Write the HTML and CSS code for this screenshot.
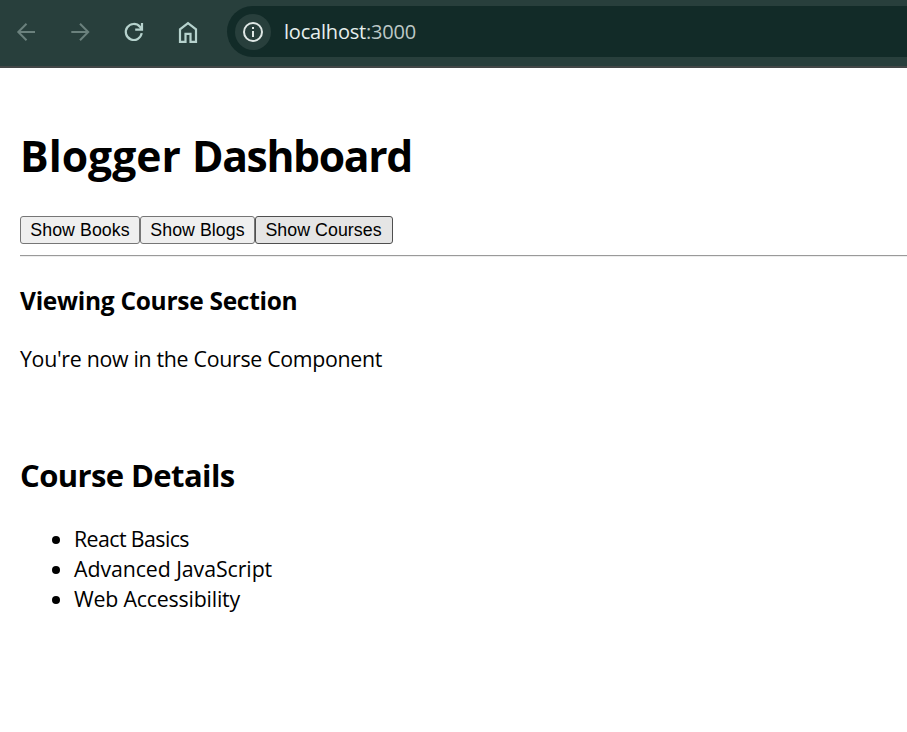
FILE: index.html
```html
<!DOCTYPE html>
<html lang="en">
<head>
<meta charset="utf-8">
<title>Blogger Dashboard</title>
<link rel="stylesheet" href="styles.css">
</head>
<body>
<header class="toolbar">
  <svg class="icon dim" viewBox="0 0 24 24"><path d="M21 12H4.300M12.500 3.800L4.300 12l8.200 8.200"/></svg>
  <svg class="icon dim" viewBox="0 0 24 24"><path d="M3.300 12h16.900M12 3.800l8.200 8.200-8.200 8.200"/></svg>
  <svg class="icon" viewBox="0 0 24 24"><path d="M19.700 13.200A8 8 0 1 1 17.900 6.800L19.900 9.200M20 3v6.700h-6.800"/></svg>
  <svg class="icon" viewBox="0 0 24 24"><path d="M4 21.900V9.300l8-6.200 8 6.200v12.600h-5.500v-8h-5v8z"/></svg>
  <div class="address">
    <span class="info"><svg class="info-icon" viewBox="0 0 22 22"><circle cx="11" cy="11" r="9"/><path d="M11 10v6M11 6v2"/></svg></span>
    <span class="url"><span class="host">localhost</span><span class="port">:3000</span></span>
  </div>
</header>
<main class="page">
  <h1 class="title">Blogger <span class="title-end">Dashboard</span></h1>
  <div class="actions">
    <button class="btn books">Show Books</button>
    <button class="btn blogs">Show Blogs</button>
    <button class="btn courses">Show Courses</button>
  </div>
  <hr class="rule">
  <h3 class="viewing">Viewing Course Section</h3>
  <p class="message">You're now in the Course Component</p>
  <h2 class="details">Course Details</h2>
  <ul class="list">
    <li><span class="l1">React Basics</span></li>
    <li><span class="l2">Advanced JavaScript</span></li>
    <li><span class="l3">Web Accessibility</span></li>
  </ul>
</main>
</body>
</html>
```
FILE: styles.css
```css
* { box-sizing: border-box; }
body {
  margin: 0;
  background: #fff;
  color: #000;
  font-family: "Open Sans", "Noto Sans", sans-serif;
  font-size: 21.33px;
  overflow: hidden;
}
.toolbar {
  display: flex;
  align-items: flex-start;
  height: 68px;
  padding: 6px 0 0 14px;
  background: #283f3c;
  border-bottom: 2px solid #434747;
}
.icon {
  flex: none;
  width: 24px;
  height: 24px;
  margin: 14px 30px 0 0;
  fill: none;
  stroke: #b6d2cd;
  stroke-width: 2.2;
}
.icon.dim { stroke: #6b817d; stroke-width: 2; }
.address {
  flex: 1;
  display: flex;
  align-items: center;
  height: 51px;
  margin-left: -3px;
  padding-left: 8px;
  background: #122b28;
  border-radius: 26px 0 0 26px;
}
.info {
  display: flex;
  align-items: center;
  justify-content: center;
  width: 36px;
  height: 36px;
  margin-right: 13px;
  border-radius: 50%;
  background: #283f3c;
}
.info-icon { width: 22px; height: 22px; fill: none; stroke: #e0e8e6; stroke-width: 2; }
.url { font-size: 20px; line-height: 28px; letter-spacing: -0.2px; white-space: nowrap; }
.host { color: #e6efed; }
.port { color: #bdc8c6; }
.page { padding: 65px 0 0 20px; white-space: nowrap; }
h1, h2, h3, p, ul { margin: 0; }
.title { font-size: 42.67px; line-height: 46px; }
.title-end { letter-spacing: -1.35px; }
.actions { display: flex; margin-top: 37px; }
.btn {
  height: 28px;
  padding: 0;
  border: 1px solid #767676;
  border-radius: 3px;
  background: #efefef;
  color: #000;
  font: 17.78px/26px "Liberation Sans", sans-serif;
  letter-spacing: 0.06px;
}
.books { width: 120px; }
.blogs { width: 115px; }
.courses { width: 138px; padding-right: 1px; background: #e5e5e5; border-color: #4f4f4f; }
.rule { height: 2px; margin: 11px 0 0; border: 0; border-top: 1px solid #9a9a9a; border-bottom: 1px solid #eee; }
.viewing { margin-top: 29px; font-size: 24.5px; line-height: 30px; letter-spacing: -0.28px; }
.message { margin-top: 28px; line-height: 30px; letter-spacing: -0.3px; }
.details { margin-top: 81px; font-size: 31px; line-height: 40px; letter-spacing: -0.6px; }
.list { margin-top: 29px; padding-left: 54px; line-height: 30px; }
.list li { height: 30px; }
.l1 { letter-spacing: -0.58px; }
.l2 { letter-spacing: -0.08px; }
.l3 { letter-spacing: -0.2px; }
```
